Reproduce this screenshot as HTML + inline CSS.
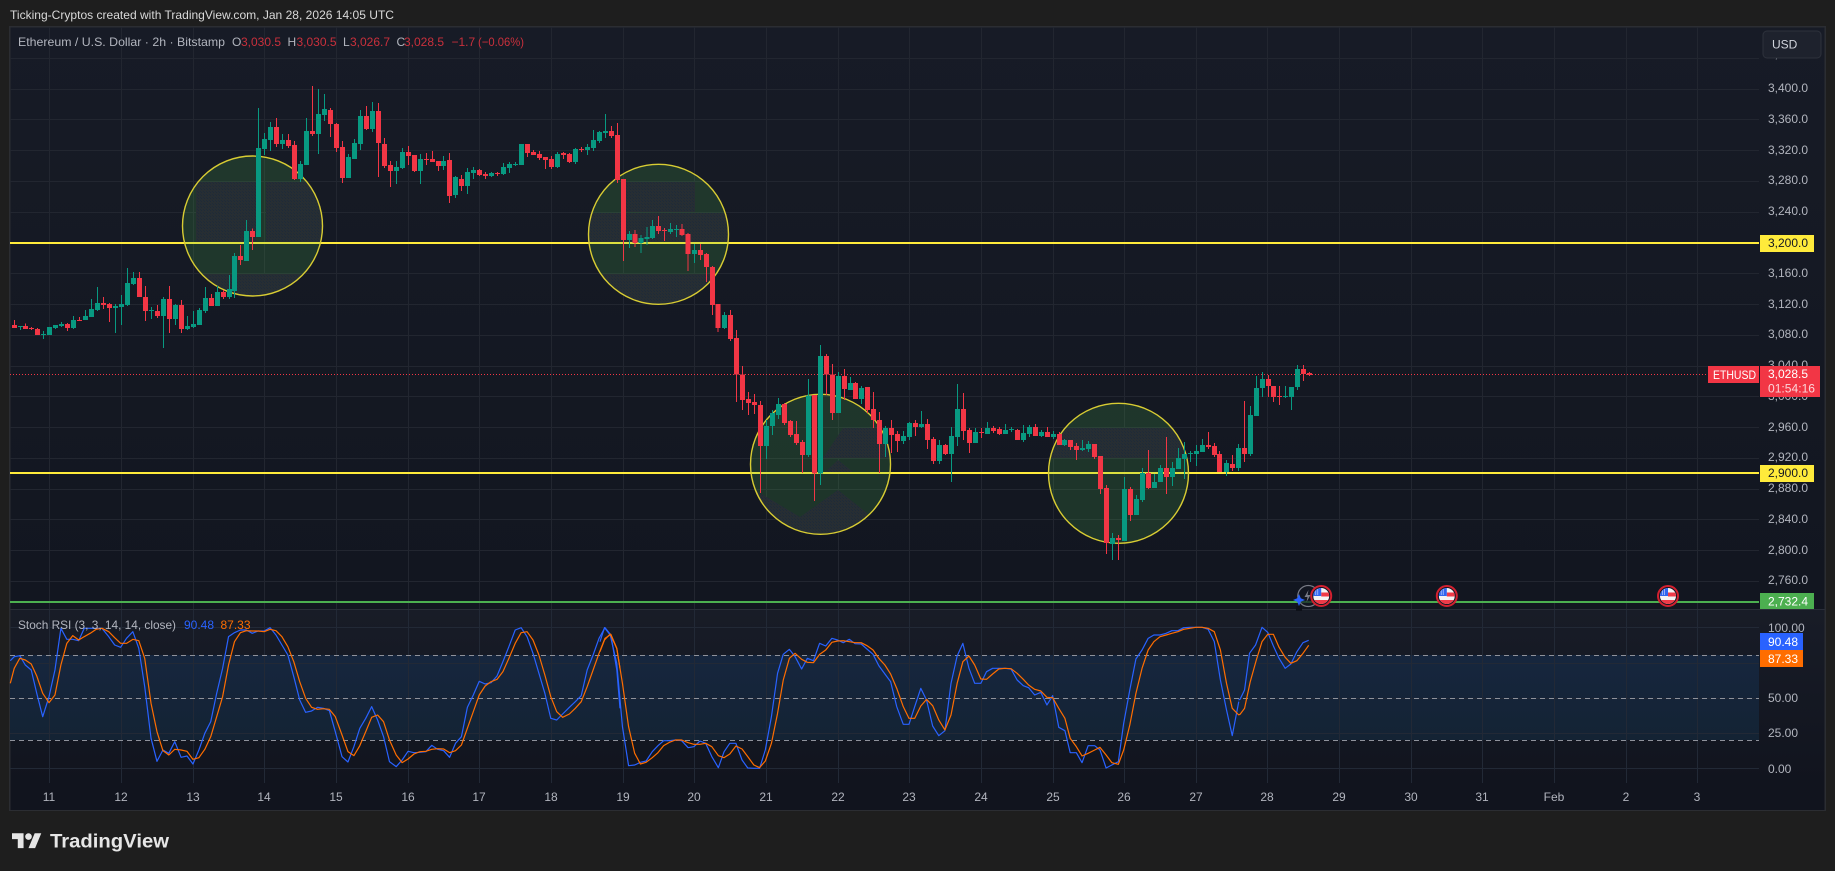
<!DOCTYPE html>
<html lang="en">
<head>
<meta charset="utf-8">
<title>ETHUSD chart</title>
<style>
html,body{margin:0;padding:0;background:#1e1e1e;width:1835px;height:871px;overflow:hidden}
svg{display:block}
text{font-family:"Liberation Sans",sans-serif;font-size:12px}
.ax{fill:#b2b5be}
.w{fill:none;stroke-width:1;vector-effect:non-scaling-stroke}
.b{fill:none;stroke-width:5;vector-effect:non-scaling-stroke}
.c path{vector-effect:non-scaling-stroke;shape-rendering:crispEdges}
.g{stroke:#089981}.r{stroke:#f23645}
.s{fill:none;stroke-width:1.2;stroke-linejoin:round;vector-effect:non-scaling-stroke}
</style>
</head>
<body>
<svg xmlns="http://www.w3.org/2000/svg" width="1835" height="871" viewBox="0 0 1835 871">
<defs>
<linearGradient id="gm" x1="0" y1="0" x2="0" y2="1"><stop offset="0" stop-color="#171b26"/><stop offset="1" stop-color="#121620"/></linearGradient>
<linearGradient id="gs" x1="0" y1="0" x2="0" y2="1"><stop offset="0" stop-color="#181c27"/><stop offset="1" stop-color="#11141e"/></linearGradient>
<linearGradient id="gb" x1="0" y1="0" x2="0" y2="1"><stop offset="0" stop-color="#16263e"/><stop offset="1" stop-color="#142334"/></linearGradient>
<pattern id="dot" width="3" height="3" patternUnits="userSpaceOnUse"><rect width="3" height="3" fill="#272e33"/><rect width="1" height="1" fill="#1e2a38"/><rect x="2" y="2" width="1" height="1" fill="#1f2b38"/></pattern>
<clipPath id="c1"><circle cx="252.5" cy="226" r="70"/></clipPath>
<clipPath id="c2"><circle cx="658.5" cy="234.3" r="70"/></clipPath>
<clipPath id="c3"><circle cx="820.5" cy="464.3" r="70"/></clipPath>
<clipPath id="c4"><circle cx="1118.5" cy="473.3" r="70"/></clipPath>
<clipPath id="fl"><circle r="8"/></clipPath>
<g id="flag">
<circle r="10" fill="#131722" stroke="#d3202f" stroke-width="2"/>
<g clip-path="url(#fl)">
<rect x="-8" y="-8" width="16" height="16" fill="#f4f4f4"/>
<rect x="0" y="-3.500" width="8" height="4" fill="#ef3a48"/>
<rect x="-8" y="4" width="16" height="4" fill="#ef3a48"/>
<rect x="-8" y="-8" width="8" height="8" fill="#2f66f0"/>
<path d="M-6-6h1m1 0h1m-3 2h1m1 0h1m-3 2h1m1 0h1" stroke="#fff" stroke-width="1"/>
</g>
</g>
</defs>

<!-- page -->
<rect width="1835" height="871" fill="#1e1e1e"/>
<text x="10" y="19" fill="#d9d9d9" textLength="384" lengthAdjust="spacingAndGlyphs">Ticking-Cryptos created with TradingView.com, Jan 28, 2026 14:05 UTC</text>

<!-- frame + pane backgrounds -->
<rect x="9" y="26" width="1817" height="785" fill="#2b2d32"/>
<rect x="10.500" y="27.500" width="1814" height="582" fill="url(#gm)"/>
<rect x="10.500" y="610" width="1814" height="173" fill="url(#gs)"/>
<rect x="10.500" y="783" width="1814" height="27" fill="#11141e"/>
<rect x="10" y="609" width="1815" height="1" fill="#2a2e39"/>

<!-- grid -->
<path fill="none" stroke="#222630" stroke-width="1" d="M10 58.500H1759M10 89.500H1759M10 119.500H1759M10 150.500H1759M10 181.500H1759M10 212.500H1759M10 243.500H1759M10 273.500H1759M10 304.500H1759M10 335.500H1759M10 366.500H1759M10 396.500H1759M10 427.500H1759M10 458.500H1759M10 489.500H1759M10 519.500H1759M10 550.500H1759M10 581.500H1759"/>
<path fill="none" stroke="#222630" stroke-width="1" d="M49.500 27V609M121.500 27V609M193.500 27V609M264.500 27V609M336.500 27V609M408.500 27V609M479.500 27V609M551.500 27V609M623.500 27V609M694.500 27V609M766.500 27V609M838.500 27V609M909.500 27V609M981.500 27V609M1053.500 27V609M1124.500 27V609M1196.500 27V609M1267.500 27V609M1339.500 27V609M1411.500 27V609M1482.500 27V609M1554.500 27V609M1626.500 27V609M1697.500 27V609"/>

<!-- stoch band + grid -->
<rect x="10" y="655" width="1749" height="85" fill="url(#gb)"/>
<path fill="none" stroke="#222936" stroke-width="1" d="M10 627.500H1759M10 663.500H1759M10 698.500H1759M10 733.500H1759M10 768.500H1759"/>
<path fill="none" stroke="#222936" stroke-width="1" d="M49.500 610V783M121.500 610V783M193.500 610V783M264.500 610V783M336.500 610V783M408.500 610V783M479.500 610V783M551.500 610V783M623.500 610V783M694.500 610V783M766.500 610V783M838.500 610V783M909.500 610V783M981.500 610V783M1053.500 610V783M1124.500 610V783M1196.500 610V783M1267.500 610V783M1339.500 610V783M1411.500 610V783M1482.500 610V783M1554.500 610V783M1626.500 610V783M1697.500 610V783"/>
<path fill="none" stroke="#8f929b" stroke-width="1" stroke-dasharray="5 4" d="M10 655.500H1759M10 698.500H1759M10 740.500H1759"/>

<!-- horizontal levels -->
<path fill="none" stroke="#ffeb3b" stroke-width="2" d="M10 243H1759M10 473H1759"/>
<path fill="none" stroke="#4caf50" stroke-width="2" d="M10 602H1759"/>
<path fill="none" stroke="#f23645" stroke-width="1" stroke-dasharray="1 2" d="M10 374.500H1708"/>

<!-- circles -->
<g fill="#4caf50" fill-opacity=".2">
<circle cx="252.500" cy="226" r="70"/><circle cx="658.500" cy="234.300" r="70"/><circle cx="820.500" cy="464.300" r="70"/><circle cx="1118.500" cy="473.300" r="70"/>
</g>
<g fill="url(#dot)">
<g clip-path="url(#c1)"><rect x="196" y="182" width="60" height="60"/><rect x="266" y="182" width="60" height="60"/><rect x="180" y="274" width="150" height="24"/></g>
<g clip-path="url(#c2)"><rect x="624" y="182" width="71" height="30"/><rect x="585" y="213" width="150" height="29"/><rect x="590" y="274" width="140" height="32"/></g>
<g clip-path="url(#c3)"><path d="M823 458L843 428H892V458Z"/><path d="M825 472L838 460L853 472Z"/><path d="M755 490L800 517L838 490L867 513L892 540H750Z"/></g>
<g clip-path="url(#c4)"><rect x="1045" y="428" width="150" height="30"/></g>
</g>
<g fill="none" stroke="#d8cc33" stroke-width="1.400">
<circle cx="252.500" cy="226" r="70"/><circle cx="658.500" cy="234.300" r="70"/><circle cx="820.500" cy="464.300" r="70"/><circle cx="1118.500" cy="473.300" r="70"/>
</g>

<!-- candles A -->
<g class="c" transform="translate(0 250) scale(.33333)">
<path class="w g" d="M61 228V240M130 243V267M148 231V255M166 225V237M184 216V231M220 198V237M256 180V210M274 147V201M292 111V183M346 162V249M364 135V225M382 54V168M400 66V105M454 171V207M490 141V294M526 162V225M562 198V240M580 183V234M598 174V225M616 111V189M652 108V168M688 75V147M704 9V144M740 -90V33M776 -426V-39"/>
<path class="b g" d="M61 228V231M130 252V255M148 231V255M166 225V234M184 222V228M220 210V234M256 198V210M274 177V201M292 159V180M346 168V174M364 162V171M382 99V165M400 84V102M454 180V183M490 147V198M526 165V207M562 228V237M580 222V231M598 180V225M616 144V183M652 126V168M688 117V141M704 18V123M740 -57V33M776 -306V-39"/>
<path class="w r" d="M43 210V234M76 220V237M94 231V240M112 234V255M202 219V243M238 201V213M310 141V177M328 159V216M418 66V141M436 108V213M472 165V204M508 108V249M544 150V249M634 132V168M670 120V147M722 -15V45M758 -65V0"/>
<path class="b r" d="M43 225V234M76 228V237M94 234V237M112 237V255M202 222V234M238 210V213M310 159V165M328 162V174M418 84V141M436 141V183M472 183V198M508 147V207M544 165V237M634 144V168M670 126V141M722 18V30M758 -57V-39"/>
</g>
<!-- candles B -->
<g class="c" transform="translate(200 80) scale(.33333)">
<path class="w g" d="M193 159V225M211 126V213M247 162V207M301 243V306M319 114V255M355 27V222M373 42V123M445 222V294M463 177V237M481 90V210M517 66V156M589 243V312M607 204V267M661 222V312"/>
<path class="b g" d="M193 177V207M211 141V180M247 180V192M301 252V297M319 153V255M355 102V162M373 87V105M445 231V294M463 189V237M481 108V192M517 93V147M589 261V273M607 216V264M661 237V273"/>
<path class="w r" d="M229 114V201M265 162V204M283 183V300M337 18V168M391 84V171M409 129V216M427 183V309M499 78V150M535 69V291M553 174V264M571 243V321M625 198V255M643 225V276M679 219V255"/>
<path class="b r" d="M229 141V192M265 180V198M283 195V297M337 153V162M391 90V132M409 132V204M427 201V294M499 108V147M535 93V189M553 192V258M571 255V273M625 216V228M643 225V273M679 237V240"/>
</g>
<!-- candles C -->
<g class="c" transform="translate(420 100) scale(.33333)">
<path class="w g" d="M70 168V210M106 228V294M142 204V282M160 201V237M214 216V231M250 189V225M268 186V219M286 186V198M304 132V195M412 156V204M466 144V192M502 132V165M520 90V153M538 93V129M556 42V114"/>
<path class="b g" d="M70 183V198M106 231V285M142 216V258M160 210V219M214 219V228M250 201V222M268 192V204M286 192V195M304 132V195M412 162V201M466 147V186M502 141V150M520 120V144M538 96V123M556 93V99"/>
<path class="w r" d="M37 153V186M55 183V213M88 159V309M124 225V273M178 207V228M196 216V237M232 216V228M322 132V171M340 150V165M358 153V180M376 171V207M394 168V207M430 156V177M448 159V189M484 141V156M574 78V114M592 69V249"/>
<path class="b r" d="M37 177V186M55 183V198M88 180V288M124 237V258M178 210V225M196 222V228M232 219V222M322 132V159M340 156V165M358 162V174M376 171V180M394 177V201M430 159V165M448 162V186M484 147V150M574 93V108M592 105V240"/>
</g>
<!-- candles D -->
<g class="c" transform="translate(600 100) scale(.3954 .33333)">
<path class="w g" d="M74 393V444M104 405V459M119 381V435M133 360V417M178 369V402M193 375V411M239 432V489M315 636V687"/>
<path class="b g" d="M74 402V420M104 414V429M119 411V417M133 378V414M178 387V396M193 387V390M239 450V462M315 645V684"/>
<path class="w r" d="M59 237V483M89 390V441M148 348V402M163 384V423M208 372V408M223 399V513M254 432V480M269 459V546M284 498V645M299 612V696M330 630V723"/>
<path class="b r" d="M59 237V420M89 402V429M148 378V393M163 390V393M208 387V405M223 402V462M254 450V465M269 462V501M284 501V615M299 612V684M330 645V717"/>
</g>
<!-- candles E -->
<g class="c" transform="translate(700 340) scale(.33333)">
<path class="w g" d="M199 240V357M217 210V285M235 174V237M325 117V351M361 15V435M415 96V219M451 111V150M484 138V192M556 258V351M610 273V312M628 246V300M664 213V264M718 300V372M754 261V426M772 132V318M826 264V309M862 246V282M916 252V282M934 261V276M970 255V306M988 255V291M1024 270V291M1060 273V297M1093 297V318M1147 300V333M1165 303V336M1237 579V660M1273 411V603M1309 465V525M1327 384V486M1363 402V444M1381 375V426M1417 366V438M1435 324V387M1453 306V417M1471 333V366M1489 315V378M1507 297V336"/>
<path class="b g" d="M199 258V318M217 219V258M235 192V225M325 166V345M361 48V401M415 108V219M451 129V150M484 144V177M556 264V312M610 288V303M628 249V291M664 252V261M718 315V363M754 288V342M772 207V291M826 276V309M862 264V282M916 270V282M934 267V270M970 279V300M988 261V282M1024 276V288M1060 282V291M1093 300V315M1147 324V330M1165 312V327M1237 594V612M1273 447V603M1309 477V525M1327 399V480M1363 426V444M1381 384V426M1417 384V411M1435 354V387M1453 342V357M1471 339V342M1489 333V342M1507 315V336"/>
<path class="w r" d="M109 -30V186M127 78V210M145 156V225M163 162V222M181 183V459M253 189V255M271 240V291M289 243V315M307 300V399M343 165V483M379 42V165M397 72V240M433 87V180M466 126V177M502 141V219M520 156V264M538 216V399M574 240V339M592 273V336M646 240V288M682 237V327M700 291V372M736 312V345M790 159V300M808 264V339M844 264V294M880 258V279M898 261V285M952 267V300M1006 252V288M1042 261V291M1078 276V315M1111 300V330M1129 309V360M1183 312V357M1201 348V462M1219 435V642M1255 585V660M1291 441V543M1345 330V447M1399 291V462M1525 276V327M1543 309V351M1558 333V396"/>
<path class="b r" d="M109 -6V103M127 103V180M145 177V189M163 186V195M181 195V318M253 192V249M271 243V285M289 282V309M307 306V345M343 165V401M379 48V103M397 103V219M433 108V147M466 129V177M502 141V210M520 207V240M538 240V312M574 264V285M592 282V303M646 249V261M682 252V300M700 297V363M736 315V342M790 207V273M808 270V309M844 276V279M880 264V273M898 267V282M952 270V300M1006 261V288M1042 276V291M1078 282V315M1111 300V321M1129 318V330M1183 312V351M1201 348V447M1219 444V609M1255 594V600M1291 447V525M1345 399V444M1399 384V411M1525 315V321M1543 318V345M1558 342V396"/>
</g>
<!-- candles F -->
<g class="c" transform="translate(1200 340) scale(.405 .33333)">
<path class="w g" d="M65 360V408M95 312V393M125 198V348M140 108V228M154 96V171M211 138V174M226 141V210M241 75V150"/>
<path class="b g" d="M65 369V396M95 324V384M125 225V342M140 144V228M154 117V144M211 168V171M226 141V171M241 87V141"/>
<path class="w r" d="M80 345V393M110 183V366M169 105V171M182 138V186M196 138V195M256 75V123M270 96V108"/>
<path class="b r" d="M80 372V384M110 324V342M169 117V138M182 138V171M196 168V171M256 87V102M270 99V105"/>
</g>

<!-- stoch lines -->
<g transform="translate(0 590) scale(.3954 .33333)">
<polyline class="s" stroke="#2962ff" points="26,212 36,200 50,197 64,225 79,240 93,310 108,380 124,320 139,240 154,115 169,148 184,148 199,152 213,115 228,115 243,115 258,115 275,140 290,165 305,172 320,145 336,125 351,175 366,290 382,445 397,514 412,480 427,490 442,455 458,502 473,498 488,522 503,480 518,430 533,395 548,310 563,235 578,140 593,128 608,120 623,120 638,130 653,123 668,123 683,113 698,135 713,165 728,195 743,260 758,330 773,367 788,363 803,352 818,355 833,362 848,425 865,500 880,516 895,470 910,415 925,385 940,350 955,390 970,440 985,515 1002,530 1017,510 1032,484 1047,488 1062,487 1077,485 1092,466 1107,478 1122,482 1137,502 1152,460 1167,440 1182,352 1197,315 1212,274 1227,282 1242,278 1257,258 1272,215 1287,170 1303,120 1318,113 1333,140 1348,190 1363,250 1378,310 1393,385 1408,390 1423,372 1440,352 1455,335 1470,317 1485,240 1500,195 1515,145 1530,113 1545,135 1560,240 1568,355"/>
<polyline class="s" stroke="#ff6d00" points="26,280 36,235 50,205 64,210 79,222 93,258 108,310 124,338 139,315 154,225 169,160 184,137 199,150 213,140 228,130 243,118 258,115 275,125 290,143 305,160 320,160 336,148 351,152 366,205 382,340 397,425 412,482 427,495 442,478 458,480 473,484 488,508 503,503 518,478 533,440 548,380 563,320 578,225 593,155 608,128 623,122 638,123 653,123 668,125 683,118 698,122 713,140 728,170 743,215 758,275 773,325 788,352 803,358 818,356 833,358 848,380 865,435 880,485 895,497 910,467 925,425 940,382 955,375 970,395 985,450 1002,495 1017,518 1032,507 1047,492 1062,485 1077,484 1092,478 1107,476 1122,477 1137,488 1152,482 1167,465 1182,415 1197,365 1212,315 1227,288 1242,275 1257,268 1272,245 1287,205 1303,160 1318,128 1333,125 1348,150 1363,195 1378,255 1393,320 1408,365 1423,382 1440,372 1455,355 1470,335 1485,290 1500,240 1515,190 1530,145 1545,133 1560,175 1568,235"/>
</g>
<g transform="translate(600 600) scale(.40816 .33333)">
<polyline class="s" stroke="#2962ff" points="0,125 11,83 25,105 41,190 55,380 70,497 85,495 99,487 113,483 128,455 142,437 156,422 170,422 185,420 200,422 216,443 230,440 245,423 259,430 274,470 290,503 304,455 318,430 333,430 348,480 362,504 377,505 391,505 405,450 420,350 435,220 449,163 464,148 478,170 494,207 508,175 523,182 538,130 553,138 568,115 582,120 596,128 611,118 625,131 640,132 654,147 669,163 683,197 698,222 712,245 727,320 743,373 757,373 771,320 786,265 800,300 815,378 830,407 845,392 860,250 875,168 889,130 904,205 918,250 933,250 947,215 962,205 977,205 992,205 1007,207 1022,240 1037,257 1050,263 1065,285 1080,277 1095,315 1109,287 1124,382 1139,392 1152,458 1167,458 1181,488 1196,437 1212,437 1225,450 1240,504 1254,495 1270,485 1283,370 1298,270 1313,177 1328,150 1343,115 1357,105 1372,105 1387,100 1401,92 1416,92 1430,83 1445,82 1460,82 1475,82 1490,88 1505,125 1520,240 1535,330 1549,407 1565,305"/>
<polyline class="s" stroke="#ff6d00" points="0,155 11,120 25,102 41,145 55,250 70,380 85,460 99,492 113,487 128,473 142,458 156,437 170,427 185,420 200,420 216,428 230,433 245,433 259,430 274,440 290,467 304,473 318,462 333,438 348,447 362,470 377,495 391,503 405,483 420,430 435,340 449,240 464,175 478,160 494,178 508,187 523,188 538,163 553,150 568,127 582,123 596,122 611,125 625,128 640,128 654,137 669,150 683,175 698,195 712,222 727,265 743,320 757,355 771,355 786,318 800,298 815,317 830,360 845,390 860,345 875,250 889,185 904,168 918,195 933,237 947,238 962,222 977,207 992,205 1007,206 1022,220 1037,238 1050,255 1065,268 1080,273 1095,292 1109,293 1124,325 1139,355 1152,415 1167,440 1181,468 1196,460 1212,450 1225,442 1240,465 1254,488 1270,493 1283,450 1298,375 1313,280 1328,205 1343,150 1357,125 1372,110 1387,105 1401,100 1416,95 1430,88 1445,85 1460,82 1475,82 1490,85 1505,95 1520,150 1535,250 1549,325 1565,345"/>
</g>
<g transform="translate(1240 570) scale(.3795 .33333)">
<polyline class="s" stroke="#2962ff" points="-4,390 0,388 12,360 25,250 41,225 58,172 73,187 88,228 103,265 119,295 134,282 150,245 166,218 181,211"/>
<polyline class="s" stroke="#ff6d00" points="-4,435 0,433 12,415 27,335 43,270 58,215 73,193 88,193 103,232 119,262 134,280 150,272 166,250 181,226"/>
</g>

<!-- event icons -->
<circle cx="1308.300" cy="596" r="10.500" fill="#131722" fill-opacity=".7" stroke="#787b86" stroke-width="1.200"/>
<path d="M1308.500 590l-4 7h3l-1 5 4-7h-3z" fill="#787b86"/>
<rect x="1296" y="606" width="6" height="5" fill="#0e1119"/>
<path d="M1299 594l1.800 4.200 4.200 1.800-4.200 1.800-1.800 4.200-1.800-4.200-4.200-1.800 4.200-1.800z" fill="#2962ff"/>
<use href="#flag" x="1321.200" y="596"/>
<use href="#flag" x="1446.800" y="596"/>
<use href="#flag" x="1668" y="596"/>

<!-- legends -->
<text x="18" y="46" fill="#b2b5be" textLength="207" lengthAdjust="spacingAndGlyphs">Ethereum / U.S. Dollar · 2h · Bitstamp</text>
<text x="232" y="46" fill="#b2b5be">O</text><text x="241" y="46" fill="#c9303c">3,030.5</text>
<text x="287.500" y="46" fill="#b2b5be">H</text><text x="296.500" y="46" fill="#c9303c">3,030.5</text>
<text x="343" y="46" fill="#b2b5be">L</text><text x="350" y="46" fill="#c9303c">3,026.7</text>
<text x="396.500" y="46" fill="#b2b5be">C</text><text x="404" y="46" fill="#c9303c">3,028.5</text>
<text x="451.500" y="46" fill="#c9303c">−1.7</text>
<text x="478" y="46" fill="#c9303c" textLength="46" lengthAdjust="spacingAndGlyphs">(−0.06%)</text>
<text x="18" y="629" fill="#b2b5be" textLength="158" lengthAdjust="spacingAndGlyphs">Stoch RSI (3, 3, 14, 14, close)</text>
<text x="184" y="629" fill="#2962ff">90.48</text>
<text x="220.500" y="629" fill="#ff6d00">87.33</text>

<!-- price axis -->
<g class="ax">
<text x="1768" y="58">3,440.0</text>
<text x="1768" y="92">3,400.0</text><text x="1768" y="123">3,360.0</text><text x="1768" y="154">3,320.0</text><text x="1768" y="184">3,280.0</text><text x="1768" y="215">3,240.0</text><text x="1768" y="277">3,160.0</text><text x="1768" y="308">3,120.0</text><text x="1768" y="338">3,080.0</text><text x="1768" y="369">3,040.0</text><text x="1768" y="400">3,000.0</text><text x="1768" y="431">2,960.0</text><text x="1768" y="461">2,920.0</text><text x="1768" y="492">2,880.0</text><text x="1768" y="523">2,840.0</text><text x="1768" y="554">2,800.0</text><text x="1768" y="584">2,760.0</text>
<text x="1768" y="632">100.00</text><text x="1768" y="702">50.00</text><text x="1768" y="737">25.00</text><text x="1768" y="773">0.00</text>
</g>

<!-- USD button -->
<rect x="1763" y="31" width="58" height="27" rx="4" fill="#1e222d" stroke="#2e323c" stroke-width="1"/>
<text x="1772" y="48.500" fill="#d1d4dc">USD</text>

<!-- price tags -->
<rect x="1760" y="235" width="54" height="17" fill="#ffeb3b"/><text x="1768" y="247" fill="#131722">3,200.0</text>
<rect x="1760" y="465" width="54" height="17" fill="#ffeb3b"/><text x="1768" y="477" fill="#131722">2,900.0</text>
<rect x="1760" y="593" width="54" height="16" fill="#4caf50"/><text x="1768" y="605.500" fill="#ffffff">2,732.4</text>
<rect x="1708" y="366" width="51" height="17" fill="#f23645"/><text x="1713" y="379" fill="#ffffff" textLength="43" lengthAdjust="spacingAndGlyphs">ETHUSD</text>
<rect x="1760" y="366" width="60" height="31" fill="#f23645"/><text x="1768" y="378" fill="#ffffff">3,028.5</text><text x="1768" y="392.500" fill="#fbd5d9" textLength="47" lengthAdjust="spacingAndGlyphs">01:54:16</text>
<rect x="1760" y="633" width="43" height="17" fill="#2962ff"/><text x="1768" y="646" fill="#ffffff">90.48</text>
<rect x="1760" y="650" width="43" height="17" fill="#ff6d00"/><text x="1768" y="663" fill="#ffffff">87.33</text>

<!-- time axis -->
<g class="ax" text-anchor="middle">
<text x="49" y="801">11</text><text x="121" y="801">12</text><text x="193" y="801">13</text><text x="264" y="801">14</text><text x="336" y="801">15</text><text x="408" y="801">16</text><text x="479" y="801">17</text><text x="551" y="801">18</text><text x="623" y="801">19</text><text x="694" y="801">20</text><text x="766" y="801">21</text><text x="838" y="801">22</text><text x="909" y="801">23</text><text x="981" y="801">24</text><text x="1053" y="801">25</text><text x="1124" y="801">26</text><text x="1196" y="801">27</text><text x="1267" y="801">28</text><text x="1339" y="801">29</text><text x="1411" y="801">30</text><text x="1482" y="801">31</text><text x="1554" y="801">Feb</text><text x="1626" y="801">2</text><text x="1697" y="801">3</text>
</g>

<!-- footer logo -->
<g transform="translate(12 830) scale(.825)" fill="#e6e6e6"><path d="M14 22H7V11H0V4h14v18zM28 22h-8l7.500-18h8L28 22z"/><circle cx="20" cy="8" r="4"/></g>
<text x="50" y="847.500" fill="#e6e6e6" style="font-size:19px;font-weight:bold" textLength="119" lengthAdjust="spacingAndGlyphs">TradingView</text>
</svg>
</body>
</html>
